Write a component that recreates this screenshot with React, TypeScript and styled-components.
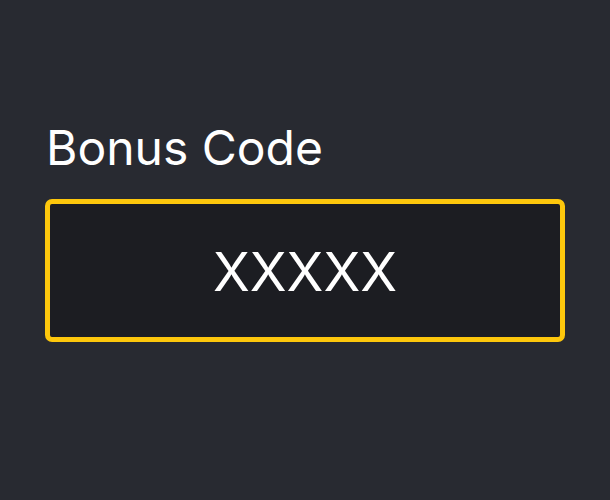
import React from "react";
import styled, { createGlobalStyle } from "styled-components";

const Global = createGlobalStyle`
  html, body {
    margin: 0;
    padding: 0;
    background: #282a31;
  }
  body {
    font-family: Inter, "Noto Sans", sans-serif;
  }
`;

const Page = styled.div`
  width: 610px;
  height: 500px;
  box-sizing: border-box;
  padding: 120px 45px 0 45px;
  background: #282a31;
`;

const Field = styled.div`
  display: flex;
  flex-direction: column;
  gap: 23px;
`;

const Label = styled.label`
  color: #ffffff;
  font-size: 48px;
  line-height: 56px;
  padding-left: 1px;
`;

const CodeBox = styled.div`
  box-sizing: border-box;
  height: 143px;
  border: 5px solid #fdc70c;
  border-radius: 7px;
  background: #1c1d22;
  display: flex;
  align-items: center;
  justify-content: center;
  color: #ffffff;
  font-size: 54px;
  padding-top: 2px;
`;

export default function App() {
  return (
    <>
      <Global />
      <Page>
        <Field>
          <Label>Bonus Code</Label>
          <CodeBox>XXXXX</CodeBox>
        </Field>
      </Page>
    </>
  );
}
